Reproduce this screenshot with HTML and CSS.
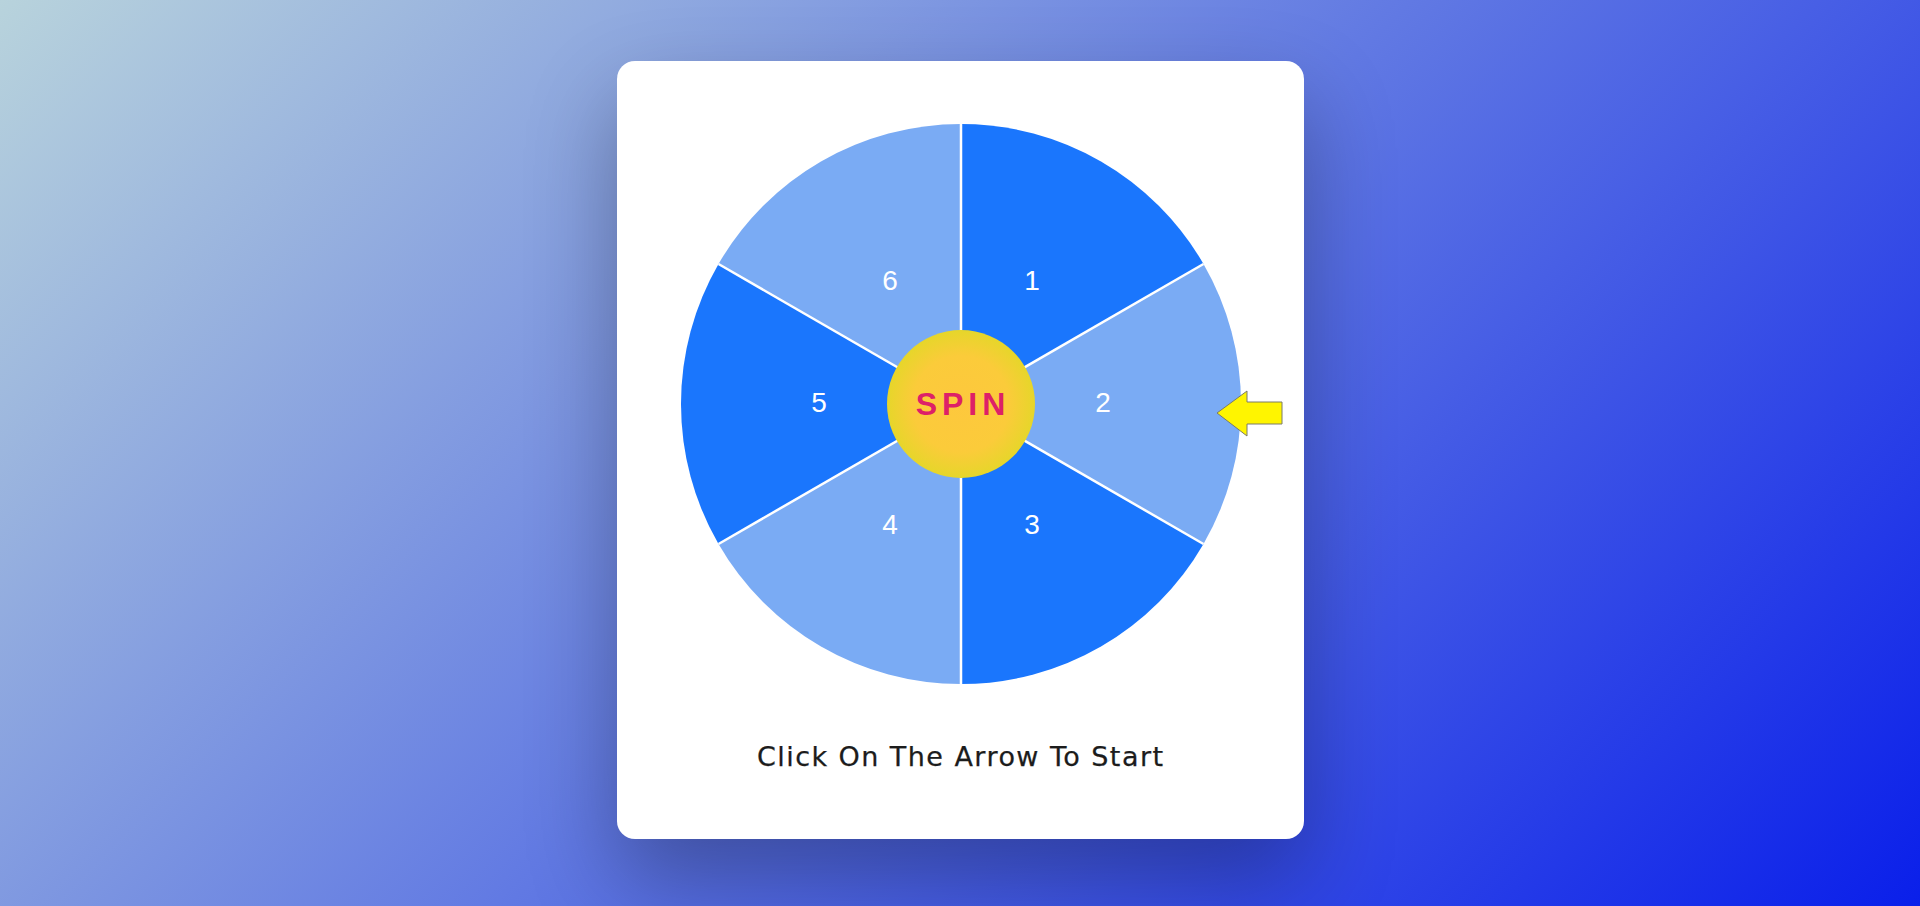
FILE: index.html
```html
<!DOCTYPE html>
<html lang="en">
<head>
<meta charset="utf-8">
<title>Spin Wheel</title>
<link rel="stylesheet" href="styles.css">
</head>
<body>
<main class="page">
  <section class="card">
    <div class="wheel">
      <svg class="wheel-svg" width="560" height="560" viewBox="0 0 560 560">
        <defs>
          <radialGradient id="spinGrad" cx="50%" cy="50%" r="50%">
            <stop offset="0%" stop-color="#fdc83d"/>
            <stop offset="65%" stop-color="#fbcb3a"/>
            <stop offset="100%" stop-color="#e6d62a"/>
          </radialGradient>
        </defs>
        <path class="seg-dark" d="M280 280 L280 0 A280 280 0 0 1 522.49 140 Z"/>
        <path class="seg-light" d="M280 280 L522.49 140 A280 280 0 0 1 522.49 420 Z"/>
        <path class="seg-dark" d="M280 280 L522.49 420 A280 280 0 0 1 280 560 Z"/>
        <path class="seg-light" d="M280 280 L280 560 A280 280 0 0 1 37.51 420 Z"/>
        <path class="seg-dark" d="M280 280 L37.51 420 A280 280 0 0 1 37.51 140 Z"/>
        <path class="seg-light" d="M280 280 L37.51 140 A280 280 0 0 1 280 0 Z"/>
        <line class="sep" x1="280" y1="0" x2="280" y2="560"/>
        <line class="sep" x1="522.49" y1="140" x2="37.51" y2="420"/>
        <line class="sep" x1="522.49" y1="420" x2="37.51" y2="140"/>
        <text class="num" x="351" y="166">1</text>
        <text class="num" x="422" y="288">2</text>
        <text class="num" x="351" y="410">3</text>
        <text class="num" x="209" y="410">4</text>
        <text class="num" x="138" y="288">5</text>
        <text class="num" x="209" y="166">6</text>
        <circle cx="280" cy="280" r="74" fill="url(#spinGrad)"/>
        <polygon class="arrow" points="536,289 566,267 566,278 601,278 601,300 566,300 566,312"/>
      </svg>
      <button class="spin">SPIN</button>
    </div>
    <p class="hint">Click On The Arrow To Start</p>
  </section>
</main>
</body>
</html>
```

FILE: styles.css
```css
* {
  box-sizing: border-box;
}

html, body {
  margin: 0;
  padding: 0;
}

body {
  width: 1920px;
  height: 906px;
  overflow: hidden;
  background: linear-gradient(135deg, #b8d3dc 0%, #0a1fea 100%);
  font-family: "DejaVu Sans", "Liberation Sans", sans-serif;
}

.page {
  height: 100%;
  display: flex;
  justify-content: center;
  align-items: flex-start;
  padding-top: 61px;
}

.card {
  width: 687px;
  height: 778px;
  background: #ffffff;
  border-radius: 18px;
  box-shadow: 0 40px 90px rgba(0, 0, 0, 0.3);
  display: flex;
  flex-direction: column;
  align-items: center;
  padding-top: 63px;
}

.wheel {
  position: relative;
  width: 560px;
  height: 560px;
  margin-left: 1px;
}

.wheel-svg {
  display: block;
  overflow: visible;
}

.seg-dark {
  fill: #1a76fd;
}

.seg-light {
  fill: #7aabf4;
}

.sep {
  stroke: #ffffff;
  stroke-width: 2.5;
}

.num {
  fill: #ffffff;
  font-family: "Liberation Sans", Arial, sans-serif;
  font-size: 28px;
  text-anchor: middle;
}

.arrow {
  fill: #fff500;
  stroke: #7a7a6a;
  stroke-width: 1;
}

.spin {
  position: absolute;
  left: 206px;
  top: 206px;
  width: 148px;
  height: 148px;
  border: none;
  border-radius: 50%;
  background: transparent;
  color: #dd2068;
  font-family: "Liberation Sans", Arial, sans-serif;
  font-weight: 700;
  font-size: 32px;
  letter-spacing: 5px;
  padding: 0 0 0 5px;
  cursor: pointer;
}

.hint {
  margin: 55px 0 0;
  font-family: "DejaVu Sans", sans-serif;
  font-weight: 400;
  font-size: 27px;
  line-height: 36px;
  letter-spacing: 1.45px;
  padding-left: 1.45px;
  color: #1c1c1c;
  -webkit-text-stroke: 0.25px #1c1c1c;
}
```
